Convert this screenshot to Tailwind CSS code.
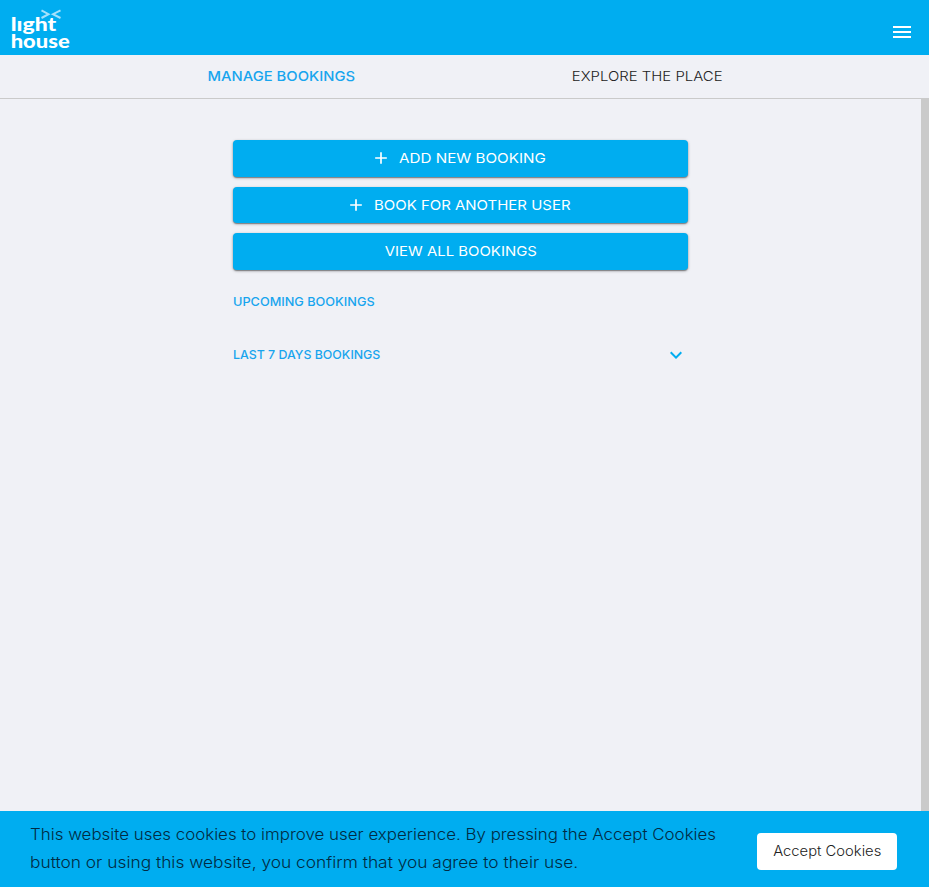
<!DOCTYPE html>
<html lang="en">
<head>
<meta charset="utf-8">
<title>Lighthouse bookings</title>
<script src="https://cdn.jsdelivr.net/npm/@tailwindcss/browser@4"></script>
</head>
<body class="flex h-screen flex-col overflow-hidden bg-[#f0f1f6] font-['Inter',sans-serif]">
<header class="flex h-[55px] shrink-0 justify-between bg-[#00adf0]">
  <svg class="h-[55px] w-[80px]" viewBox="0 0 80 55" fill="#fff" font-family="Lato, sans-serif" font-weight="900" font-size="19.500" role="img" aria-label="light house">
    <text x="10.700" y="31.200" textLength="45.500" lengthAdjust="spacingAndGlyphs">lıght</text>
    <text x="10.700" y="48.300" textLength="59" lengthAdjust="spacingAndGlyphs">house</text>
    <path d="M41.500 10.300 48.500 14.200 41.500 18M60.500 10.300 53 14.200 60.500 18" fill="none" stroke="#a5e1fb" stroke-width="2"/>
  </svg>
  <button class="mr-[15px] mt-[20px] size-6" aria-label="Menu"><svg class="size-6" viewBox="0 0 24 24" fill="#fff"><path d="M3 18h18v-2H3v2zm0-5h18v-2H3v2zm0-7v2h18V6H3z"/></svg></button>
</header>
<nav class="flex h-[44px] shrink-0 justify-center border-b border-[#cacaca] text-[13.5px] leading-[43px]">
  <div class="w-[366px] text-center font-medium text-[#18a5ee]"><span class="inline-block scale-x-[1.097]">MANAGE BOOKINGS</span></div>
  <div class="w-[366px] text-center font-light text-[#222]"><span class="inline-block scale-x-[1.105]">EXPLORE THE PLACE</span></div>
</nav>
<main class="flex min-h-0 flex-1 justify-center border-r-8 border-[#cacaca] pt-[41px]">
  <div class="w-[455px] whitespace-nowrap text-[13.5px] text-white">
    <button class="flex h-[37px] w-full items-center justify-center rounded-[4px] bg-[#00adf0] pb-px pr-[3px] shadow-[0_1px_3px_rgba(0,0,0,0.35),0_1px_1px_rgba(0,0,0,0.3)]"><svg class="mr-2 size-[20px]" viewBox="0 0 24 24" fill="currentColor"><path d="M19 13h-6v6h-2v-6H5v-2h6V5h2v6h6v2z"/></svg><span class="w-[148px] origin-left scale-x-[1.126] text-left">ADD NEW BOOKING</span></button>
    <button class="mt-[10px] flex h-[36px] w-full items-center justify-center rounded-[4px] bg-[#00adf0] pr-[3px] shadow-[0_1px_3px_rgba(0,0,0,0.35),0_1px_1px_rgba(0,0,0,0.3)]"><svg class="mr-2 size-[20px]" viewBox="0 0 24 24" fill="currentColor"><path d="M19 13h-6v6h-2v-6H5v-2h6V5h2v6h6v2z"/></svg><span class="w-[198px] origin-left scale-x-[1.108] text-left">BOOK FOR ANOTHER USER</span></button>
    <button class="mt-[10px] flex h-[37px] w-full items-center justify-center rounded-[4px] bg-[#00adf0] shadow-[0_1px_3px_rgba(0,0,0,0.35),0_1px_1px_rgba(0,0,0,0.3)]"><span class="scale-x-[1.105]">VIEW ALL BOOKINGS</span></button>
    <h2 class="mt-[22px] text-[12px] font-medium leading-[20px] text-[#18a5ee]"><span class="inline-block origin-left scale-x-[1.06]">UPCOMING BOOKINGS</span></h2>
    <div class="mt-[31px] flex h-[24px] items-center justify-between text-[12px] font-medium text-[#18a5ee]"><h2><span class="inline-block origin-left scale-x-[1.032]">LAST 7 DAYS BOOKINGS</span></h2><svg class="size-6" viewBox="0 0 24 24" fill="#00adf0"><path d="M7.410 8.590 12 13.170l4.590-4.580L18 10l-6 6-6-6z"/></svg></div>
  </div>
</main>
<footer class="flex h-[76px] shrink-0 items-center justify-between bg-[#00adf0] pl-[30px] pr-[32px]">
  <p class="whitespace-nowrap text-[15.5px] font-light leading-[28px] text-[#002b43]"><span class="inline-block origin-left scale-x-[1.091]">This website uses cookies to improve user experience. By pressing the Accept Cookies</span><br><span class="inline-block origin-left scale-x-[1.119]">button or using this website, you confirm that you agree to their use.</span></p>
  <button class="mt-[4px] h-[37px] w-[140px] rounded-[4px] bg-white pb-px text-[14px] font-light text-[#222]"><span class="inline-block scale-x-[1.055]">Accept Cookies</span></button>
</footer>
</body>
</html>
